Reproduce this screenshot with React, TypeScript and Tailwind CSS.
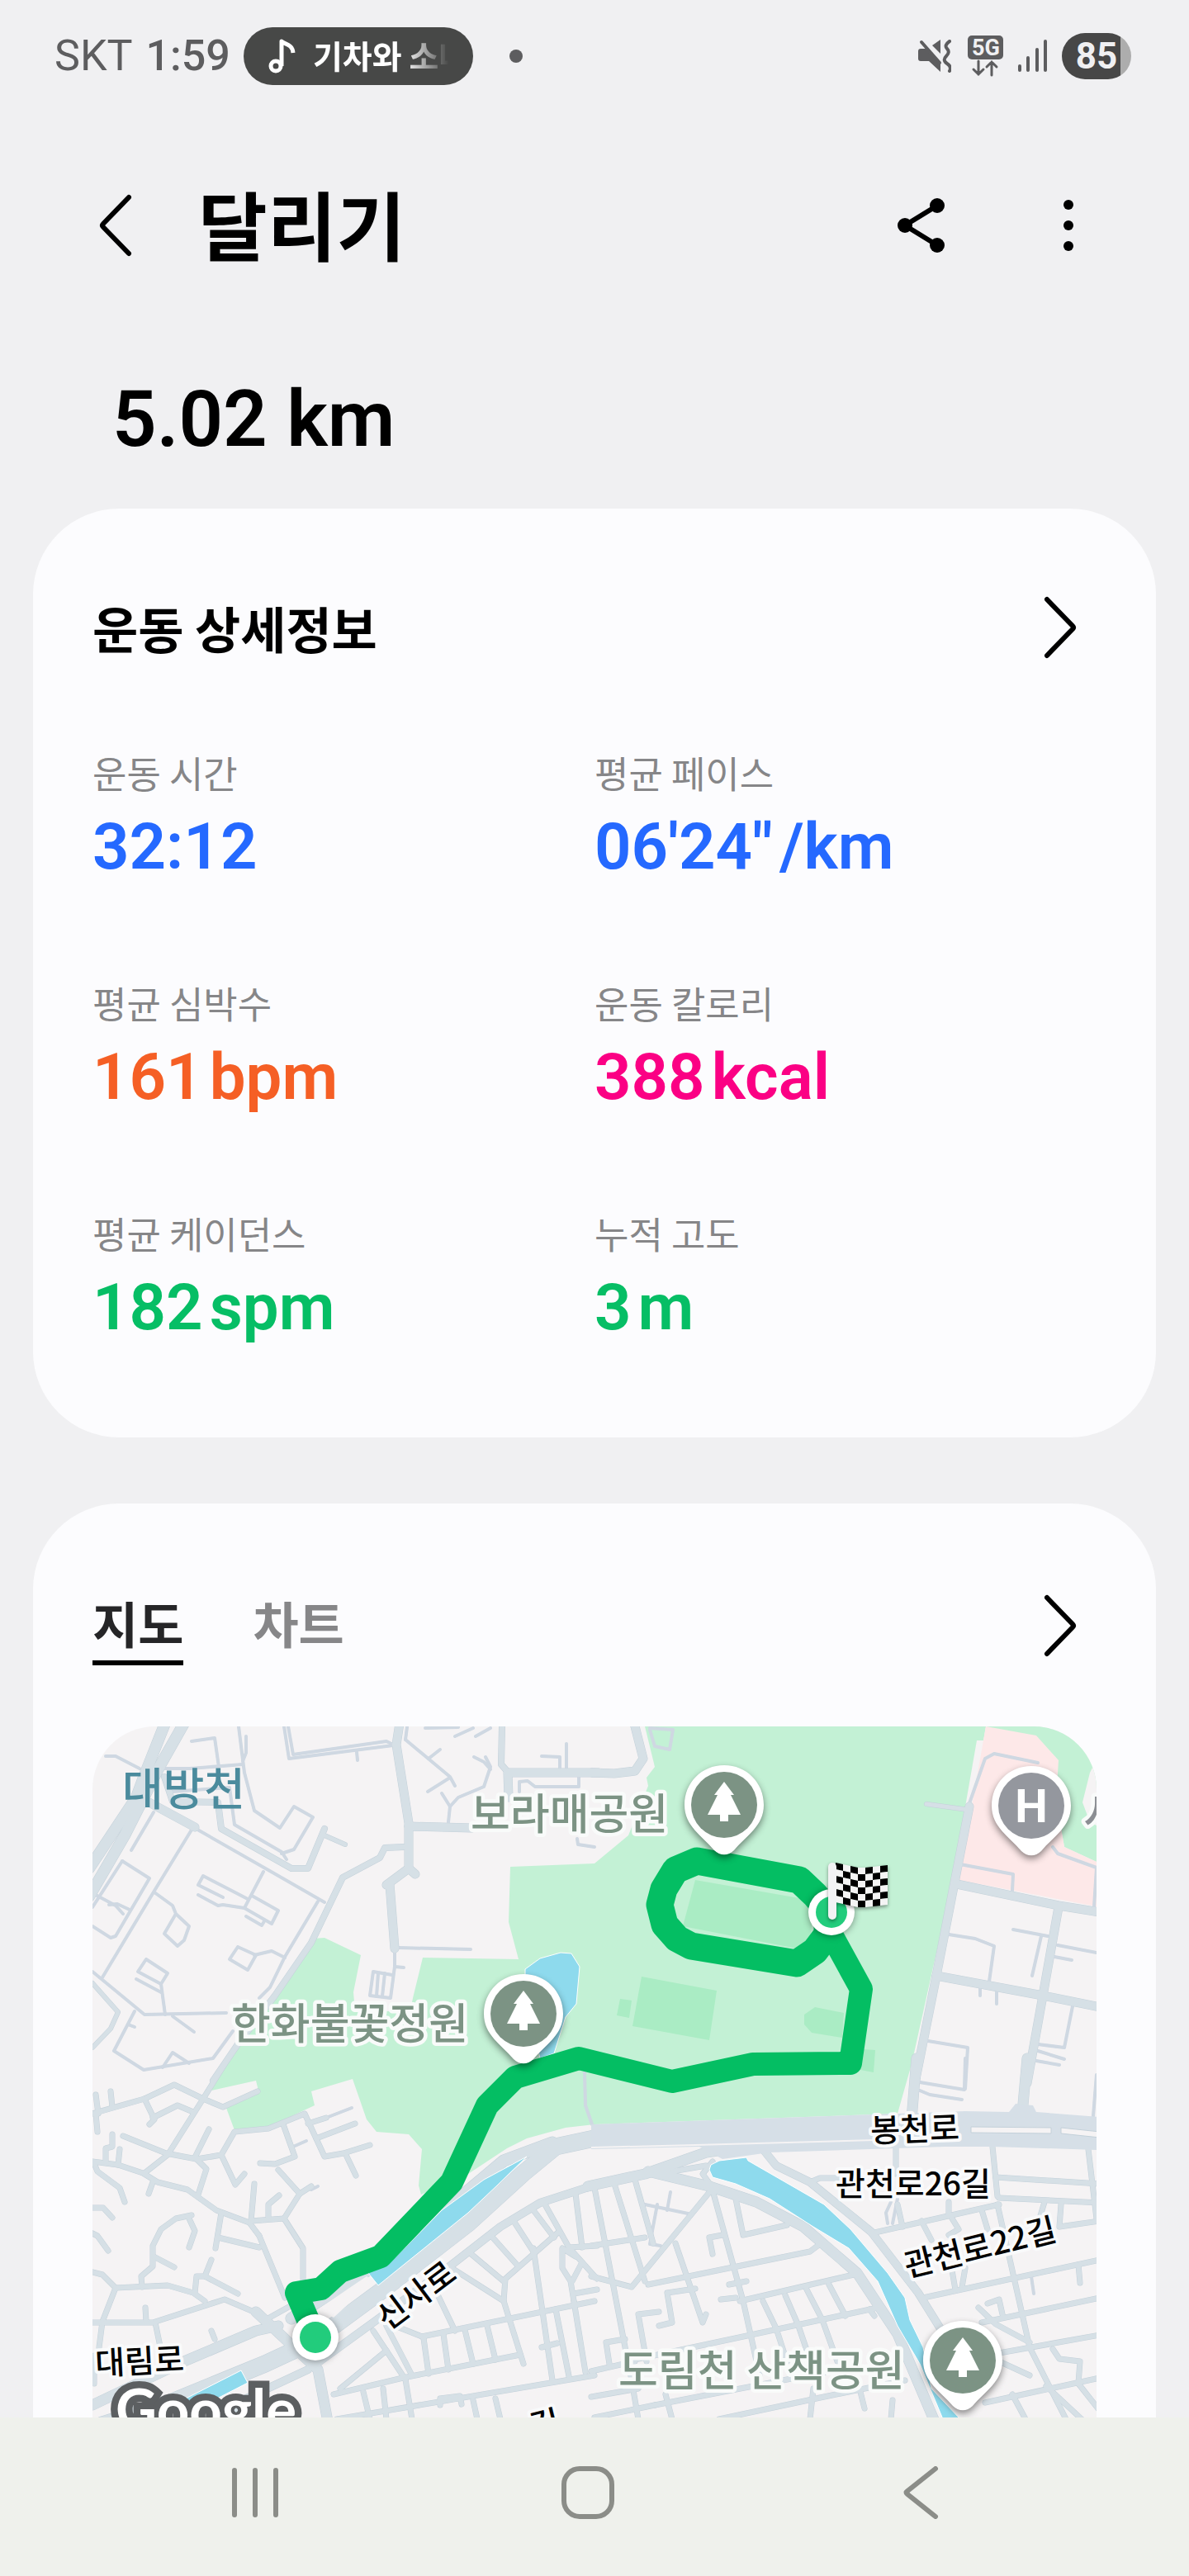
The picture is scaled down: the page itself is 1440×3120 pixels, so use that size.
import { useState } from "react"

interface Metric {
  label: string
  value: string
  unit?: string
  color: string
}

interface Tile {
  x: number
  y: number
  sx: number
  sy: number
}

interface Road {
  width: number
  lines: string[]
}

interface TileRoads {
  tile: Tile
  roads: Road[]
}

const METRICS: Metric[] = [
  { label: "운동 시간", value: "32:12", color: "text-[#2569ff]" },
  { label: "평균 페이스", value: "06'24\"", unit: "/km", color: "text-[#2569ff]" },
  { label: "평균 심박수", value: "161", unit: "bpm", color: "text-[#f55f25]" },
  { label: "운동 칼로리", value: "388", unit: "kcal", color: "text-[#fb0084]" },
  { label: "평균 케이던스", value: "182", unit: "spm", color: "text-[#06be65]" },
  { label: "누적 고도", value: "3", unit: "m", color: "text-[#06be65]" },
]

// Streets are stored in tile units, each tile has its own origin and scale
const NW: Tile = { x: -12, y: -11, sx: 620 / 1568, sy: 1 / 3 }
const NE: Tile = { x: 608, y: -11, sx: 640 / 1568, sy: 1 / 3 }
const SW: Tile = { x: -12, y: 409, sx: 620 / 1568, sy: 1 / 3 }
const SE: Tile = { x: 608, y: 409, sx: 640 / 1568, sy: 1 / 3 }

const ROADS: TileRoads[] = [
  {
    tile: NW,
    roads: [
      {
        width: 3,
        lines: [
          "70,140 100,140 175,185", "335,87 405,75 418,180", "240,185 330,185 490,170",
          "478,33 495,200 525,340 605,402 648,323 705,362 648,480 610,495",
          "500,70 500,130 490,160", "340,400 570,555 740,672", "275,270 450,255 465,390 610,490 625,515",
          "340,400 220,630 60,945", "218,345 150,483", "617,33 632,150 950,103",
          "630,33 645,135 930,88 950,98", "840,125 842,157", "990,80 1125,215 1140,250",
          "1095,118 1060,150", "1125,220 1058,270", "995,35 988,80", "1120,380 1125,325 1100,275",
          "1125,325 1150,290 1230,253 1250,180 1235,143", "1250,190 1230,163 1200,143",
          "1140,70 1195,38", "1203,68 1250,38", "1050,40 1150,36", "1405,140 1462,145 1462,185",
          "1483,97 1483,185", "1337,270 1337,235 1362,230 1385,252 1520,252 1520,215",
          "1515,440 1518,463 1568,470", "965,838 1188,842", "955,850 955,905 985,908",
          "955,905 943,1020 880,1010 890,925 948,935", "925,930 918,1015", "905,930 900,1015",
          "720,670 620,870 575,980 540,1020", "525,865 580,850 620,872",
          "475,835 530,865 505,917 450,880 475,835", "555,560 495,692 430,680 415,685 355,645",
          "518,648 600,703 578,750 495,692", "430,655 355,610 370,575 505,660",
          "500,722 548,757 556,742", "30,640 100,685 125,715", "122,522 205,585 100,795 85,802 30,760",
          "122,522 30,690", "80,680 105,677 145,700",
          "220,635 275,685 285,715 327,760 310,810 290,830 250,785 285,715",
          "195,880 260,930 240,970 170,925 195,880", "165,950 240,1000", "240,970 253,1080",
          "30,925 190,1080 440,1075", "160,1068 97,1213 187,1280 400,1240 460,1140",
          "245,1272 275,1218 325,1258", "275,1085 342,1143", "140,1115 160,1125",
        ],
      },
      { width: 5, lines: ["30,965 108,1070 85,1130 30,1200", "740,430 805,463"] },
      {
        width: 7,
        lines: [
          "250,215 275,305 415,310 425,405 640,550 690,548 740,405",
          "985,470 925,475 910,510 797,583 700,820 590,1010 480,1180 400,1320",
          "1285,33 1283,170 1300,195",
        ],
      },
      {
        width: 10,
        lines: [
          "190,300 343,400", "970,20 962,100 998,385 998,550 1020,570", "998,550 930,610 940,605 955,840",
          "1000,395 1190,402", "1305,290 1303,202 1580,201",
        ],
      },
      { width: 13, lines: ["252,20 190,210 165,290 20,550", "312,20 235,180 130,430 20,650"] },
    ],
  },
  {
    tile: NE,
    roads: [
      {
        width: 3,
        lines: [
          "165,45 180,105 222,118 233,45 165,40", "1110,320 1160,150 1185,132 1315,165",
          "1085,535 1243,570 1240,630", "1050,790 1130,805 1185,830 1170,960", "1243,770 1345,795",
          "1325,795 1298,940", "1375,828 1490,855", "1365,870 1415,883", "1143,985 1143,1010",
          "1192,1000 1192,1040", "990,1175 1108,1200 1100,1350", "1418,1050 1393,1200 1315,1187",
          "1315,1213 1393,1242", "1310,1248 1380,1262", "1360,470 1375,495 1490,545 1483,690",
        ],
      },
      { width: 5, lines: ["985,315 1110,335"] },
      {
        width: 10,
        lines: [
          "-8,201 60,205 120,195 145,150 118,20", "1112,325 1015,940 950,1330", "1075,605 1378,685 1500,708",
          "1378,690 1330,1010 1285,1330", "1015,940 1330,1010 1500,1052",
        ],
      },
    ],
  },
  {
    tile: SW,
    roads: [
      { width: 3, lines: ["745,195 825,160", "645,300 685,280", "700,455 720,445", "1538,30 1540,150 1560,220"] },
      {
        width: 6,
        lines: [
          "30,355 110,365 185,395 230,430 320,455 410,530 510,575 540,625", "40,110 48,180", "85,100 92,155",
          "30,180 190,125 280,75 370,125 430,155 535,100", "435,0 370,125 260,330 190,395",
          "190,125 220,200 205,220", "215,195 290,150 340,175", "40,180 45,245", "92,255 90,300 72,305 72,350",
          "115,310 110,365", "125,260 255,325 350,345 425,330 465,245 570,235 680,180 740,335 800,325 880,293",
          "388,238 345,340", "425,330 468,438 495,400", "350,345 380,380 355,475", "215,430 203,470",
          "35,360 45,390 115,450 130,500", "690,215 745,195", "715,270 835,215", "615,220 650,335 590,362 545,360",
          "810,335 837,405", "600,383 665,470 618,560 675,670 675,790", "665,470 700,445",
          "525,435 515,570 618,560", "570,560 570,510 603,478", "540,625 620,850", "425,540 407,668",
          "415,630 540,665", "30,522 62,522 90,557", "30,615 45,625 78,678",
          "335,550 285,560 240,600 215,660 215,735 180,770 182,810", "325,560 343,605 325,665", "218,700 280,738",
          "30,755 60,765 100,812 260,803 340,830 375,862", "395,712 375,770 350,770 345,830", "375,770 475,835",
          "100,812 60,935 50,1030", "30,938 215,940 435,855 535,905", "192,885 195,935", "222,940 238,1025",
          "395,968 405,1000", "35,1060 35,1160", "650,870 560,930", "1510,470 1530,665", "1415,510 1490,665 1575,660",
          "1490,665 1575,780", "1380,530 1445,630", "1320,570 1380,680", "1250,620 1330,730", "1180,680 1290,790",
          "1130,740 1290,860 1295,780 1460,610", "1040,990 1568,860", "1380,670 1440,1150", "1290,860 1350,1090",
          "1080,820 1140,970", "930,940 1040,990", "890,970 990,1145", "770,1200 980,1140 1340,1055", "790,1180 930,1040",
          "1045,995 1060,1125", "1105,980 1120,1110", "1170,965 1195,1090", "1240,950 1265,1075", "930,950 1010,1130",
          "860,1190 880,1290", "920,1180 930,1290", "990,1145 1010,1290", "1195,1220 1210,1290", "1265,1215 1280,1290",
          "780,1290 1568,1130", "1095,1240 1095,1215 1155,1205 1160,1235", "1405,1030 1455,1015", "1450,890 1490,1135",
          "1505,860 1540,1120", "1510,700 1470,670 1470,740 1495,790 1505,860", "1500,790 1530,720", "1505,835 1575,820",
        ],
      },
      { width: 9, lines: ["1580,435 1400,505 1280,590 1130,730 900,930 715,1090", "690,1110 500,1215 430,1290"] },
      { width: 12, lines: ["600,950 530,970 310,1080 30,1240", "530,900 720,1110 750,1300"] },
      { width: 14, lines: ["1440,285 1290,350 1130,510 900,730 640,925"] },
      { width: 20, lines: ["1590,265 1450,300 1350,395 1180,580 920,820 700,1010 560,1090 250,1240 60,1310"] },
    ],
  },
  {
    tile: SE,
    roads: [
      {
        width: 3,
        lines: [
          "965,65 1098,93 1100,-20", "965,95 995,110 1090,130", "1490,40 1480,190", "150,510 290,545", "225,465 215,530",
          "185,510 165,655 195,660", "1297,770 1303,835", "870,580 865,540 880,500", "900,490 885,580",
        ],
      },
      {
        width: 6,
        lines: [
          "895,300 895,400", "1180,300 1195,480", "1465,310 1490,560", "640,430 670,415 720,415", "1190,410 1500,435",
          "1200,485 1500,505", "820,615 1200,510", "900,510 915,590", "1385,510 1380,590 1500,570", "1335,500 1320,560",
          "975,850 1500,710", "1195,510 1290,1030", "970,570 1000,640", "1060,560 1080,600 1050,620", "1050,500 1050,550",
          "1150,530 1165,600", "1100,740 1090,810", "1060,750 1070,820", "1435,730 1440,795", "1150,940 1500,850",
          "1140,885 1190,945 1290,1010", "1200,1050 1500,985", "1165,870 1200,855 1210,910",
          "1360,1035 1380,1070 1440,1080 1435,1160", "1160,1230 1500,1140", "1290,1030 1400,1290", "1340,1170 1445,1290",
          "1435,1160 1500,1260", "1240,1200 1280,1290", "1200,1080 1290,1130", "0,450 95,1060", "60,435 150,790",
          "120,420 175,650", "345,460 110,810 -10,770", "350,460 440,860 490,1130", "240,650 320,940 330,910",
          "-10,660 150,630", "160,800 640,680 670,655", "420,490 440,620 570,585", "380,620 340,630 350,690",
          "430,860 770,765", "375,855 420,850", "450,790 400,800", "130,1070 440,990 840,885", "500,860 540,960",
          "565,840 605,950", "630,820 675,930", "695,800 745,915", "300,815 215,830 230,940 190,950",
          "190,900 130,910 155,1080", "90,1000 35,1010 45,1090", "-10,1115 120,1080", "180,1240 470,1170 760,1100",
          "-10,1210 130,1180", "370,1290 680,1210 920,1150", "650,1180 640,1290", "790,1190 800,1250",
          "885,1220 880,1290", "100,1080 130,1290", "210,1200 230,1290", "540,960 570,1080", "605,950 650,1110",
          "675,930 720,1080", "815,890 830,915", "200,395 330,370", "350,355 320,400 345,440", "0,1284 180,1240",
        ],
      },
      { width: 9, lines: ["500,310 540,370 640,430 820,610 960,830 1060,1030"] },
      {
        width: 12,
        lines: [
          "400,310 330,320 150,400 -20,445", "160,390 340,445 480,500 620,590 780,760 900,980 1010,1300",
          "955,-20 940,200", "1285,-20 1270,180",
        ],
      },
    ],
  },
]

// Water and blocks that sit on top of the streets
const WATER = [
  { tile: NW, points: "1355,915 1400,875 1465,855 1497,858 1522,905 1512,1040 1480,1090 1445,1220 1400,1240 1355,1000" },
  { tile: SW, points: "1360,335 1270,440 1180,540 905,805 875,760 960,700 1100,530 1230,420" },
  { tile: SW, points: "485,1112 507,1158 330,1265 300,1225" },
  {
    tile: SE,
    points:
      "345,365 370,350 450,338 455,350 680,510 760,600 870,760 920,850 935,930 975,1030 1000,1180 1085,1290 1035,1290 965,1090 900,950 840,790 755,670 650,590 520,490 420,435 350,410 340,385",
  },
]

const FIELDS = [
  "298,590 650,665 640,835 600,840 262,760",
  "140,943 363,993 340,1173 113,1122",
  "75,1023 110,1030 103,1092 67,1082",
  "655,1053 740,1073 735,1165 645,1145 622,1115 622,1080",
  "798,1205 833,1210 828,1290 790,1280",
]

const PARK =
  "506,170 504,237 516,282 400,280 388,329 385,345 318,345 316,322 325,277 281,256 267,257 225,322 174,389 144,441 198,429 201,441 162,462 172,489 209,487 269,459 265,442 315,427 332,476 344,491 383,494 399,512 395,556 398,567 455,542 502,511 526,499 573,486 608,482 975,469 992,409 1041,189 1071,17 1079,17 1082,0 669,0 681,49 671,62 673,72 649,132 608,166"

const ROUTE =
  "270,740 247,686 277,681 300,660 349,642 435,552 478,459 512,425 589,402 702,430 800,409 918,408 931,318 897,256"

const LAP =
  "305,523 240,555 205,625 193,680 208,752 245,803 287,832 600,893 655,850 690,790 690,700 655,645 607,590"

function project(tile: Tile, points: string) {
  return points
    .split(" ")
    .map((pair) => {
      const [x, y] = pair.split(",").map(Number)
      return `${Math.round(tile.x + x * tile.sx)},${Math.round(tile.y + y * tile.sy)}`
    })
    .join(" ")
}

function Roads({ edge }: { edge?: boolean }) {
  return (
    <g fill="none" stroke={edge ? "#c3d0d9" : "#d6e0e6"} strokeLinecap="round" strokeLinejoin="round">
      {ROADS.map(({ tile, roads }) =>
        roads.map((road) =>
          road.lines.map((line) => (
            <polyline
              key={line}
              points={project(tile, line)}
              strokeWidth={edge ? road.width + 1 : road.width}
              stroke={road.width === 3 ? "#cfd8e2" : undefined}
            />
          ))
        )
      )}
    </g>
  )
}

function Pin({ x, y, color, hospital }: { x: number; y: number; color: string; hospital?: boolean }) {
  return (
    <g transform={`translate(${x} ${y})`}>
      <path
        d="M0 -48C27 -48 48 -27 48 0C48 26 27 37 12 55C5 62 -5 62 -12 55C-27 37 -48 26 -48 0C-48 -27 -27 -48 0 -48Z"
        fill="#fff"
        className="drop-shadow-[0_4px_4px_rgba(0,0,0,0.45)]"
      />
      <circle r="40" fill={color} />
      {hospital ? (
        <text y="20" textAnchor="middle" fill="#fff" className="font-[Roboto] text-[56px] font-bold">
          H
        </text>
      ) : (
        <path d="M0 -28L12 -12H8L20 12H5V20H-5V12H-20L-8 -12H-12Z" fill="#fff" />
      )}
    </g>
  )
}

function Flag() {
  const wave = [0, 2, 4, 6, 6, 5, 4]
  return (
    <g className="drop-shadow-[0_2px_2px_rgba(0,0,0,0.4)]">
      {wave.map((dy, col) =>
        [0, 1, 2, 3, 4, 5].map((row) => {
          const x = 900 + col * 9
          const y = 165 + dy + row * 8
          const end = wave[col + 1] === undefined ? dy - 1 : wave[col + 1]
          return (
            <path
              key={`${col}-${row}`}
              d={`M${x} ${y}L${x + 9} ${y + end - dy}V${y + end - dy + 8}L${x} ${y + 8}Z`}
              fill={(col + row) % 2 ? "#f4f4f4" : "#000"}
            />
          )
        })
      )}
      <path d="M896 170V229" stroke="#f2f2f4" strokeWidth="10" strokeLinecap="round" />
    </g>
  )
}

function Marker({ x, y }: { x: number; y: number }) {
  return (
    <g>
      <circle cx={x} cy={y} r="28" fill="#fff" className="drop-shadow-[0_1px_4px_rgba(0,0,0,0.4)]" />
      <circle cx={x} cy={y} r="19" fill="#22cc7c" />
    </g>
  )
}

function RouteMap() {
  return (
    <svg
      viewBox="0 0 1216 837"
      preserveAspectRatio="xMidYMin slice"
      role="img"
      aria-label="달리기 경로 지도"
      className="block h-full w-full"
    >
      <rect width="1216" height="837" fill="#f5f3f4" />
      <polygon points={PARK} fill="#c3f1d5" />
      <path d="M1082 0H1216V164L1177 146L1167 89V41Z" fill="#c3f1d5" />
      <path d="M1216 40L1208 56L1199 92L1208 116L1216 120Z" fill="#f5f3f4" />
      <path d="M1082 0L1143 11L1170 41L1167 89L1177 146L1216 164V218L1049 186Z" fill="#fde8e8" />
      {FIELDS.map((points) => (
        <polygon key={points} points={project(NE, points)} fill="#aaecc4" />
      ))}

      <Roads edge />
      <Roads />
      <polygon
        points={project(SE, "-10,220 900,180 1100,172 1230,175 1250,145 1300,150 1310,173 1500,192 1500,312 1180,300 1040,300 520,320 380,345 310,300 -10,310")}
        fill="#d6dfe7"
      />
      <polyline points={project(SE, "-10,302 300,293 830,275")} fill="none" stroke="#f5f3f4" strokeWidth="2" />
      <polygon points={project(SE, "1118,228 1355,230 1355,253 1118,250")} fill="#f5f3f4" stroke="#c3d0d9" />
      <polygon points={project(SE, "1385,232 1500,247 1500,267 1385,253")} fill="#f5f3f4" stroke="#c3d0d9" />
      <polygon points={project(SW, "720,890 870,770 890,790 770,920")} fill="#f5f3f4" />
      {WATER.map(({ tile, points }) => (
        <polygon key={points} points={project(tile, points)} fill="#8edaed" stroke="#fff" strokeWidth="1" />
      ))}

      <g fill="none" stroke="#04be63" strokeLinejoin="round">
        <polyline points={ROUTE} strokeWidth="28" />
        <polygon points={project(NE, LAP)} strokeWidth="33" />
      </g>

      <g strokeLinejoin="round" strokeWidth="9" stroke="#f9fbfa" className="text-[52px] font-medium [paint-order:stroke]">
        <text x="36" y="96" fill="#4b8b9d" stroke="none" className="text-[54px]">대방천</text>
        <text x="458" y="125" fill="#7c9384">보라매공원</text>
        <text x="168" y="379" fill="#7c9384">한화불꽃정원</text>
        <text x="637" y="799" fill="#7c9384">도림천 산책공원</text>
        <text x="1200" y="125" fill="#8b8e93">서</text>
      </g>
      <g
        textAnchor="middle"
        strokeLinejoin="round"
        strokeWidth="8"
        stroke="#f9fafb"
        fill="#000"
        className="text-[39px] font-medium [paint-order:stroke]"
      >
        <text transform="translate(392 689) rotate(-37)" y="14">신사로</text>
        <text transform="translate(57 769) rotate(-3)" y="14">대림로</text>
        <text transform="translate(996 488) rotate(-2)" y="14">봉천로</text>
        <text x="994" y="568">관천로26길</text>
        <text transform="translate(1075 631) rotate(-14)" y="14">관천로22길</text>
        <text transform="translate(548 845) rotate(-14)" y="14">길</text>
      </g>

      <Marker x={270} y={740} />
      <Marker x={895} y={225} />
      <Flag />
      <Pin x={522} y={348} color="#7c9384" />
      <Pin x={765} y={95} color="#7c9384" />
      <Pin x={1054} y={768} color="#7c9384" />
      <Pin x={1137} y={96} color="#94979e" hospital />

      <text
        x="28"
        y="852"
        fill="#fff"
        stroke="#5c5f61"
        strokeWidth="17"
        className="font-[Lato] text-[69px] font-bold [paint-order:stroke]"
      >
        Google
      </text>
    </svg>
  )
}

function StatusBar() {
  return (
    <div className="flex h-[136px] items-center justify-between pr-[70px] pl-[66px] text-[#5d5d5f]">
      <div className="flex items-center">
        <span className="font-[Roboto] text-[52px] leading-none">SKT</span>
        <span className="ml-4 font-[Roboto] text-[52px] leading-none font-medium">1:59</span>
        <div className="ml-4 flex h-[70px] w-[278px] items-center rounded-full bg-[#474847] pl-[30px] text-white">
          <svg viewBox="0 0 34 42" className="h-[42px] w-[34px] shrink-0" fill="none" stroke="currentColor" strokeWidth="5">
            <circle cx="9" cy="33" r="6" />
            <path d="M16 33V3C20 7 29 6 30 17" strokeLinejoin="round" />
          </svg>
          <span className="ml-5 w-[168px] overflow-hidden pb-1 text-[39px] leading-[56px] font-bold whitespace-nowrap [mask-image:linear-gradient(to_right,#000_65%,transparent_98%)]">
            기차와 소나무
          </span>
        </div>
        <span className="ml-[44px] size-4 rounded-full bg-[#5d5d5f]" />
      </div>

      <div className="flex items-center">
        <svg viewBox="0 0 40 40" className="size-10" fill="currentColor">
          <path d="M0 14Q0 11 3 11H9L27 30V39L13 26H3Q0 26 0 23Z" />
          <path d="M17 7L27 0V17Z" />
          <path d="M4 3L26 28" stroke="currentColor" strokeWidth="4" strokeLinecap="round" />
          <path
            d="M38 2Q31 7 35 11T34 20T35 29T38 38"
            fill="none"
            stroke="currentColor"
            strokeWidth="4"
            strokeLinecap="round"
          />
        </svg>
        <svg viewBox="0 0 44 50" className="ml-5 h-[50px] w-[44px]">
          <rect width="43" height="29" rx="5" fill="currentColor" />
          <text x="22" y="24" textAnchor="middle" fill="#f0f0f2" className="font-[Roboto] text-[27px] font-bold">
            5G
          </text>
          <path
            d="M13 31V47M7 41L13 47L19 41M29 48V32M23 38L29 32L35 38"
            fill="none"
            stroke="currentColor"
            strokeWidth="3"
            strokeLinecap="round"
          />
        </svg>
        <svg viewBox="0 0 38 40" className="ml-4 h-10 w-[38px]" stroke="currentColor" strokeWidth="4" strokeLinecap="round">
          <path d="M3 32V37M13 22V37M24 12V37M34 2V37" />
        </svg>
        <div className="ml-4 flex h-14 w-[84px] items-center justify-center rounded-full bg-linear-to-r from-[#474747] from-85% to-[#adadad] to-85% font-[Roboto] text-[44px] leading-none font-bold text-[#f0f0f2]">
          85
        </div>
      </div>
    </div>
  )
}

function ChevronButton({ label }: { label: string }) {
  return (
    <button aria-label={label} className="size-20 shrink-0">
      <svg viewBox="0 0 80 80" className="size-20" fill="none" stroke="#000" strokeWidth="6" strokeLinecap="round">
        <path d="M20 6L51 38Q53 40 51 42L20 74" />
      </svg>
    </button>
  )
}

export default function App() {
  const [activeTab, setActiveTab] = useState("지도")

  return (
    <div className="flex min-h-screen flex-col bg-[#f0f0f2] font-['Noto_Sans_CJK_KR',sans-serif] text-black">
      <StatusBar />

      {/* Header */}
      <header className="flex h-[274px] items-center justify-between pr-[106px] pl-[100px]">
        <div className="flex items-center">
          <button aria-label="뒤로" className="size-20">
            <svg viewBox="0 0 80 80" className="size-20" fill="none" stroke="#000" strokeWidth="6" strokeLinecap="round">
              <path d="M56 6L25 38Q23 40 25 42L56 74" />
            </svg>
          </button>
          <h1 className="ml-[60px] pb-2 text-[91px] leading-[104px] font-bold">달리기</h1>
        </div>
        <div className="flex items-center gap-[98px]">
          <button aria-label="공유" className="size-20">
            <svg viewBox="0 0 80 80" className="size-20">
              <path d="M59 16L20 40L59 64" fill="none" stroke="#000" strokeWidth="6" />
              <circle cx="20" cy="40" r="9" />
              <circle cx="59" cy="16" r="9" />
              <circle cx="59" cy="64" r="9" />
            </svg>
          </button>
          <button aria-label="더보기" className="size-20">
            <svg viewBox="0 0 80 80" className="size-20">
              <circle cx="40" cy="15" r="6" />
              <circle cx="40" cy="40" r="6" />
              <circle cx="40" cy="65" r="6" />
            </svg>
          </button>
        </div>
      </header>

      <p className="px-[136px] pt-[50px] pb-[60px] font-[Roboto] text-[94px] leading-[96px] font-semibold">5.02 km</p>

      {/* Workout details */}
      <section className="mx-10 rounded-[104px] bg-[#fcfcfe] px-[72px] pt-[104px] pb-[117px]">
        <div className="flex items-center justify-between">
          <h2 className="text-[60px] leading-[72px] font-bold">운동 상세정보</h2>
          <ChevronButton label="운동 상세정보 보기" />
        </div>
        <dl className="mt-[106px] grid grid-cols-2 gap-y-[119px]">
          {METRICS.map((metric) => (
            <div key={metric.label}>
              <dt className="text-[45px] leading-[60px] text-[#868688]">{metric.label}</dt>
              <dd className={`mt-5 flex gap-2 font-[Roboto] text-[78px] leading-[80px] font-semibold ${metric.color}`}>
                <span>{metric.value}</span>
                {metric.unit && <span>{metric.unit}</span>}
              </dd>
            </div>
          ))}
        </dl>
      </section>

      {/* Map and chart */}
      <section className="mx-10 mt-20 flex-1 rounded-t-[104px] bg-[#fcfcfe] px-[72px] pt-[108px]">
        <div className="flex items-start justify-between">
          <div role="tablist" className="flex gap-[84px]">
            {["지도", "차트"].map((tab) => (
              <button
                key={tab}
                role="tab"
                aria-selected={activeTab === tab}
                onClick={() => setActiveTab(tab)}
                className={`border-b-6 pb-[10px] text-[60px] leading-[72px] font-bold ${
                  activeTab === tab ? "border-black text-[#252527]" : "border-transparent text-[#868688]"
                }`}
              >
                {tab}
              </button>
            ))}
          </div>
          <ChevronButton label="지도 보기" />
        </div>
        <div className="mt-[74px] h-[837px] overflow-hidden rounded-t-[76px]">
          <RouteMap />
        </div>
      </section>

      {/* System navigation */}
      <nav className="grid h-[192px] grid-cols-3 items-center justify-items-center bg-[#eff1ec] pr-[124px] pb-[10px] pl-[108px] text-[#8b8d88]">
        <button aria-label="최근 앱">
          <svg viewBox="0 0 64 64" className="size-16" stroke="currentColor" strokeWidth="6" strokeLinecap="round">
            <path d="M7 5V59M32 5V59M57 5V59" />
          </svg>
        </button>
        <button aria-label="홈">
          <svg viewBox="0 0 66 66" className="size-[66px]" fill="none" stroke="currentColor" strokeWidth="6">
            <rect x="4" y="4" width="58" height="58" rx="19" />
          </svg>
        </button>
        <button aria-label="이전">
          <svg viewBox="0 0 64 64" className="size-16" fill="none" stroke="currentColor" strokeWidth="6" strokeLinecap="round">
            <path d="M50 3L16 30Q13 32 16 34L50 61" />
          </svg>
        </button>
      </nav>
    </div>
  )
}
